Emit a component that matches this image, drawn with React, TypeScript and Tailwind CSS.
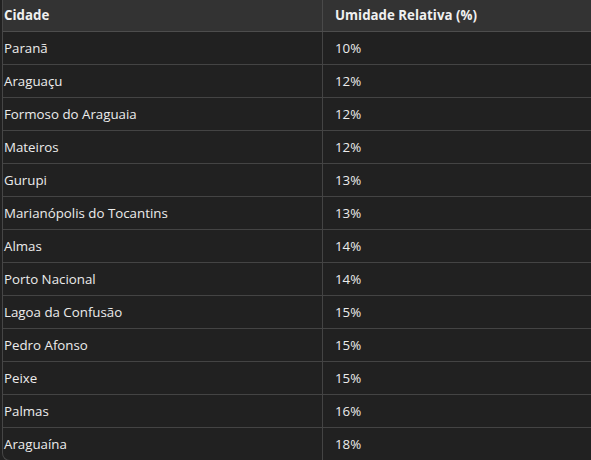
import React from "react";

const rows: [string, string][] = [
  ["Paranã", "10%"],
  ["Araguaçu", "12%"],
  ["Formoso do Araguaia", "12%"],
  ["Mateiros", "12%"],
  ["Gurupi", "13%"],
  ["Marianópolis do Tocantins", "13%"],
  ["Almas", "14%"],
  ["Porto Nacional", "14%"],
  ["Lagoa da Confusão", "15%"],
  ["Pedro Afonso", "15%"],
  ["Peixe", "15%"],
  ["Palmas", "16%"],
  ["Araguaína", "18%"],
];

export default function App() {
  return (
    <div
      className="w-[591px] h-[460px] overflow-hidden bg-[#212121] pl-[2px]"
      style={{ fontFamily: '"Segoe UI", "Open Sans", "Noto Sans", sans-serif' }}
    >
      <div className="w-[620px] border-l border-b border-[#464646] rounded-bl-lg overflow-hidden text-[13.3px] text-[#ececec]">
        <div className="flex h-[32px] bg-[#333333] border-b border-[#4d4d4d]">
          <div className="w-[320px] flex items-center pl-[1px] pt-[1px] font-bold text-[#f0f0f0] border-r border-[#4a4a4a]">
            Cidade
          </div>
          <div className="flex-1 flex items-center pl-[12px] pt-[1px] font-bold text-[#f0f0f0]">
            Umidade Relativa (%)
          </div>
        </div>
        {rows.map(([c, v], i) => (
          <div
            key={c}
            className={
              i < rows.length - 1
                ? "flex h-[33px] border-b border-[#444444]"
                : "flex h-[32px]"
            }
          >
            <div className="w-[320px] flex items-center pl-[1px] pt-[2px] border-r border-[#444444]">
              {c}
            </div>
            <div className="flex-1 flex items-center pl-[12px] pt-[2px]">{v}</div>
          </div>
        ))}
      </div>
    </div>
  );
}
